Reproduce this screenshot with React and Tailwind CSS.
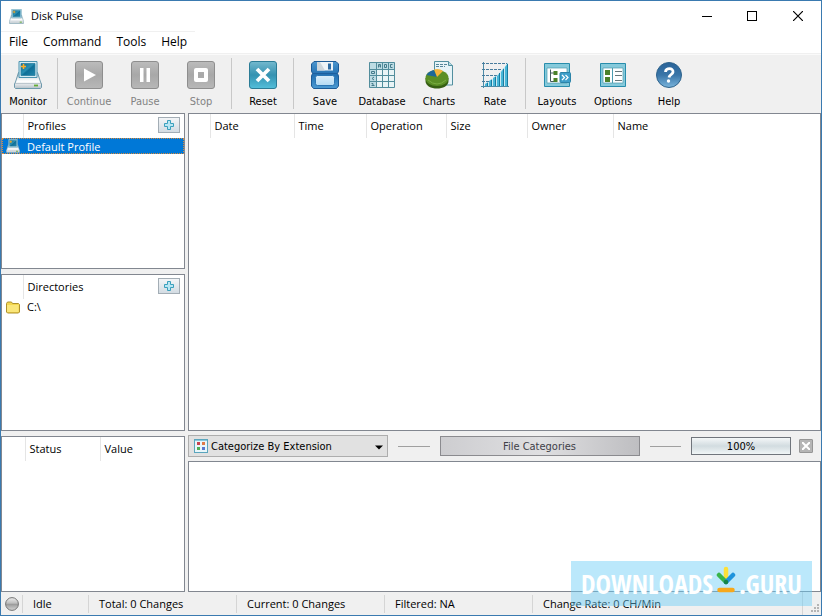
import React from 'react';

const MENUS = ['File', 'Command', 'Tools', 'Help'];

const TOOLBAR = [
  [{ label: 'Monitor', icon: MonitorIcon, width: 'w-[54px]' }],
  [
    { label: 'Continue', icon: ContinueIcon, disabled: true },
    { label: 'Pause', icon: PauseIcon, disabled: true },
    { label: 'Stop', icon: StopIcon, disabled: true },
  ],
  [{ label: 'Reset', icon: ResetIcon }],
  [
    { label: 'Save', icon: SaveIcon },
    { label: 'Database', icon: DatabaseIcon, width: 'w-[58px]' },
    { label: 'Charts', icon: ChartsIcon },
    { label: 'Rate', icon: RateIcon },
  ],
  [
    { label: 'Layouts', icon: LayoutsIcon },
    { label: 'Options', icon: OptionsIcon },
    { label: 'Help', icon: HelpIcon },
  ],
];

const EVENT_COLUMNS = [
  { label: '', width: 'w-[21px]' },
  { label: 'Date', width: 'w-[84px]' },
  { label: 'Time', width: 'w-[72px]' },
  { label: 'Operation', width: 'w-[80px]' },
  { label: 'Size', width: 'w-[81px]' },
  { label: 'Owner', width: 'w-[86px]' },
  { label: 'Name', width: '' },
];

const STATUS_COLUMNS = [
  { label: '', width: 'w-[23px]' },
  { label: 'Status', width: 'w-[75px]' },
  { label: 'Value', width: '' },
];

export default function App() {
  return (
    <div className="relative flex min-h-screen flex-col border border-[#3a7ab0] bg-[#f0f0f0] font-['Open_Sans','Noto_Sans',sans-serif] text-[11px] leading-4 text-black">
      <TitleBar />
      <MenuBar />
      <Toolbar />
      <main className="flex flex-1 gap-[3px]">
        <div className="flex w-[184px] shrink-0 flex-col gap-[5px]">
          <ListPanel title="Profiles">
            <tr className="h-4 bg-[#0078d7] text-white outline-1 -outline-offset-1 outline-dotted outline-[#d98a3a]">
              <td className="pl-1"><MonitorIcon className="h-[14px] w-[14px]" /></td>
              <td className="pl-1 leading-[15px]" colSpan={2}>Default Profile</td>
            </tr>
          </ListPanel>
          <ListPanel title="Directories">
            <tr className="h-4">
              <td className="pl-1"><FolderIcon /></td>
              <td className="pl-1" colSpan={2}>C:\</td>
            </tr>
          </ListPanel>
          <section className="flex-1 border border-[#828790] bg-white">
            <HeaderTable columns={STATUS_COLUMNS} />
          </section>
        </div>
        <div className="flex min-w-0 flex-1 flex-col">
          <section className="flex-1 border border-[#828790] bg-white">
            <HeaderTable columns={EVENT_COLUMNS} />
          </section>
          <CategoryBar />
          <section className="h-[131px] border border-[#828790] bg-white" />
        </div>
      </main>
      <StatusBar />
      <Watermark />
    </div>
  );
}

function TitleBar() {
  return (
    <header className="flex h-[30px] items-center bg-white pl-2">
      <MonitorIcon className="h-[15px] w-[15px]" />
      <h1 className="ml-[7px] flex-1">Disk Pulse</h1>
      <button aria-label="Minimize" className="flex h-full w-[45px] items-center justify-center">
        <svg width="10" height="10" shapeRendering="crispEdges"><path d="M0 5.5h10" stroke="#000" /></svg>
      </button>
      <button aria-label="Maximize" className="flex h-full w-[46px] items-center justify-center">
        <svg width="10" height="10" shapeRendering="crispEdges"><path d="M.5.5h9v9h-9z" fill="none" stroke="#000" /></svg>
      </button>
      <button aria-label="Close" className="flex h-full w-[46px] items-center justify-center">
        <svg width="10" height="10"><path d="M0 0l10 10M10 0L0 10" stroke="#000" strokeWidth="1.2" /></svg>
      </button>
    </header>
  );
}

function MenuBar() {
  return (
    <nav className="flex h-[23px] border-b border-[#f0f0f0] bg-white text-[12px]">
      <div className="flex h-[21px] items-center gap-[15px] border-t border-[#f0f0f0] px-2">
        {MENUS.map((menu) => <button key={menu}>{menu}</button>)}
      </div>
    </nav>
  );
}

function Toolbar() {
  return (
    <div role="toolbar" className="flex h-[59px] items-stretch border-t border-[#fafafa]">
      {TOOLBAR.map((group, i) => (
        <React.Fragment key={i}>
          {i > 0 && <div className="mt-[3px] mr-[3px] mb-1 ml-[2px] w-px bg-[#c8c8c8]" />}
          {group.map(({ label, icon: Icon, disabled, width = 'w-[56px]' }) => (
            <button
              key={label}
              disabled={disabled}
              className={`flex ${width} shrink-0 flex-col items-center gap-[5px] pt-[6px] font-['DejaVu_Sans_Condensed','Noto_Sans',sans-serif] ${disabled ? 'text-[#838383]' : ''}`}
            >
              <Icon className="h-7 w-7" />
              {label}
            </button>
          ))}
        </React.Fragment>
      ))}
    </div>
  );
}

function ListPanel({ title, children }) {
  return (
    <section className="flex-1 border border-[#828790] bg-white">
      <table className="w-full table-fixed border-collapse">
        <thead>
          <tr className="h-6">
            <th className="w-[21px] border-r border-[#e5e5e5]" />
            <th className="pl-1 text-left font-normal">{title}</th>
            <th className="w-[26px] pb-[2px]">
              <button aria-label={`Add ${title}`} className="flex h-[16px] w-[22px] items-center justify-center border border-[#a3adb5] bg-linear-to-b from-[#f3f5f7] to-[#d3dce3]">
                <svg width="10" height="10" viewBox="0 0 10 10">
                  <path d="M3.5.5h3v3h3v3h-3v3h-3v-3h-3v-3h3z" fill="#b9e6f3" stroke="#3aa0bd" />
                </svg>
              </button>
            </th>
          </tr>
        </thead>
        <tbody>{children}</tbody>
      </table>
    </section>
  );
}

function HeaderTable({ columns }) {
  return (
    <table className="w-full table-fixed border-collapse">
      <thead>
        <tr className="h-6">
          {columns.map(({ label, width }) => (
            <th key={label} className={`${width} border-r border-[#e5e5e5] pl-1 text-left font-normal last:border-r-0`}>{label}</th>
          ))}
        </tr>
      </thead>
    </table>
  );
}

function CategoryBar() {
  return (
    <div className="flex h-[30px] items-center pr-2 font-['DejaVu_Sans_Condensed','Noto_Sans',sans-serif]">
      <div className="relative w-[200px]">
        <select aria-label="Category" className="block h-[22px] w-full appearance-none border border-[#adadad] bg-[#e1e1e1] pt-px pl-[22px]">
          <option>Categorize By Extension</option>
        </select>
        <svg className="pointer-events-none absolute top-1 left-[6px]" width="14" height="14" viewBox="0 0 14 14">
          <rect x=".5" y=".5" width="13" height="13" fill="#e9f6fa" stroke="#5aa5bd" />
          <path d="M1 1.500h12" stroke="#8bc9dc" />
          <path d="M3 3h3v3H3z" fill="#c8434f" /><path d="M8 3h3v3H8z" fill="#e07a48" />
          <path d="M3 8h3v3H3z" fill="#4fae55" /><path d="M8 8h3v3H8z" fill="#5a78cf" />
        </svg>
        <svg className="pointer-events-none absolute top-[10px] right-[5px]" width="8" height="5"><path d="M0 .5h8L4 4.500z" fill="#000" /></svg>
      </div>
      <div className="mx-[10px] h-px flex-1 bg-[#a0a0a0]" />
      <button className="h-[20px] w-[200px] border border-[#8b8b8f] bg-linear-to-r from-[#cdcdd0] via-[#dfdfe1] to-[#bebec1] pt-px text-[#404048]">File Categories</button>
      <div className="mx-[10px] h-px flex-1 bg-[#a0a0a0]" />
      <div role="progressbar" aria-label="Percentage" aria-valuenow={100} className="h-[18px] w-[100px] border border-[#70757c] bg-linear-to-b from-[#f4f7f8] via-[#d2dce0] to-[#f0f5f6] pt-px text-center">100%</div>
      <button aria-label="Close categories" className="ml-2 flex h-[14px] w-[14px] items-center justify-center rounded-[1px] border border-[#969696] bg-[#b5b5b5]">
        <svg width="8" height="8"><path d="M0 0l8 8M8 0L0 8" stroke="#fff" strokeWidth="2" /></svg>
      </button>
    </div>
  );
}

function StatusBar() {
  return (
    <footer className="flex h-[23px] items-center">
      <svg className="mr-[3px] ml-1 shrink-0" width="14" height="14" viewBox="0 0 14 14">
        <defs>
          <linearGradient id="led" x2="0" y2="1"><stop stopColor="#ededed" /><stop offset=".45" stopColor="#bcbcbc" /><stop offset=".5" stopColor="#989898" /><stop offset="1" stopColor="#d6d6d6" /></linearGradient>
        </defs>
        <circle cx="7" cy="7" r="6.400" fill="url(#led)" stroke="#747474" />
      </svg>
      <StatusCell className="w-[66px]">Idle</StatusCell>
      <StatusCell className="w-[148px]">Total: 0 Changes</StatusCell>
      <StatusCell className="w-[148px]">Current: 0 Changes</StatusCell>
      <StatusCell className="w-[148px]">Filtered: NA</StatusCell>
      <StatusCell className="flex-1">Change Rate: 0 CH/Min</StatusCell>
      <div className="flex h-full w-[19px] items-end justify-end border-l border-[#d5d5d5] p-px">
        <svg width="11" height="11" shapeRendering="crispEdges">
          <path d="M8 1h2v2H8zM8 4h2v2H8zM8 7h2v2H8zM5 4h2v2H5zM5 7h2v2H5zM2 7h2v2H2z" fill="#b4b4b4" />
        </svg>
      </div>
    </footer>
  );
}

function StatusCell({ className, children }) {
  return (
    <div className={`${className} h-[18px] shrink-0 border-l border-[#d5d5d5] pt-px pl-[10px]`}>{children}</div>
  );
}

function Watermark() {
  return (
    <div className="absolute right-[9px] bottom-[9px] flex h-[45px] w-[241px] items-center justify-center bg-[#68cbf7]/45 font-['Liberation_Sans_Narrow','Open_Sans_Condensed',sans-serif] text-[26px] leading-none font-bold text-white">
      <span>DOWNLOADS</span>
      <svg className="mx-[3px] mb-2 shrink-0" width="20" height="27" viewBox="0 0 20 27" strokeLinecap="round" strokeWidth="4.500">
        <path d="M10 3v10" stroke="#fde038" />
        <path d="M3 9l7 7" stroke="#39b54a" />
        <path d="M17 9l-7 7" stroke="#1e93dc" />
        <path d="M10 16h0" stroke="#168447" />
        <path d="M3.500 24h13" stroke="#f7a81b" />
      </svg>
      <span>.GURU</span>
    </div>
  );
}

function FolderIcon() {
  return (
    <svg width="15" height="14" viewBox="0 0 15 14">
      <path d="M.5 3.500l1-1.500h4l1 1.500h6l1 1V12l-1 1H1.500l-1-1z" fill="#f3d64e" stroke="#ad902c" />
      <path d="M1 5h11.500v7H1z" fill="#fae67a" />
    </svg>
  );
}

/* Toolbar icons */

function MonitorIcon({ className }) {
  return (
    <svg className={className} viewBox="0 0 28 28">
      <defs>
        <linearGradient id="screen" x2="1" y2="1"><stop stopColor="#0a6a92" /><stop offset=".45" stopColor="#2a8fb2" /><stop offset=".55" stopColor="#0f6f97" /><stop offset="1" stopColor="#2388ad" /></linearGradient>
        <linearGradient id="base" x2="0" y2="1"><stop stopColor="#b9c3ca" /><stop offset=".55" stopColor="#fff" /><stop offset="1" stopColor="#b5c0c8" /></linearGradient>
      </defs>
      <path d="M4.500 11.500h19l3 9.500 1 2v3.500l-1 1h-25l-1-1V23l1-2z" fill="url(#base)" stroke="#6d99ac" />
      <path d="M5 .5h18v16H5z" fill="#d5edf5" stroke="#4b93af" />
      <path d="M7 2.500h14v12H7z" fill="url(#screen)" stroke="#2b7fa0" strokeWidth=".8" />
      <path d="M9.500 3v5M7 5.500h5" stroke="#ffae24" strokeWidth="1.600" />
      <path d="M1 22.500h26" stroke="#aab8c0" strokeWidth=".7" />
      <path d="M20 24.500h4" stroke="#65ad35" strokeWidth="1.800" />
    </svg>
  );
}

function GreyTile({ className, children }) {
  return (
    <svg className={className} viewBox="0 0 28 28">
      <defs>
        <linearGradient id="grey" x2="0" y2="1"><stop stopColor="#bcbcbc" /><stop offset=".5" stopColor="#a8a8a8" /><stop offset="1" stopColor="#b8b8b8" /></linearGradient>
      </defs>
      <rect x=".5" y=".5" width="27" height="27" rx="2.500" fill="url(#grey)" stroke="#8e8e8e" />
      {children}
    </svg>
  );
}

function ContinueIcon(props) {
  return <GreyTile {...props}><path d="M9 7.500v13L21 14z" fill="#fff" /></GreyTile>;
}

function PauseIcon(props) {
  return <GreyTile {...props}><path d="M9 7h3.500v14H9zM15.500 7H19v14h-3.500z" fill="#fff" /></GreyTile>;
}

function StopIcon(props) {
  return <GreyTile {...props}><path d="M9 9h10v10H9z" fill="none" stroke="#fff" strokeWidth="4" strokeLinejoin="round" /></GreyTile>;
}

function ResetIcon({ className }) {
  return (
    <svg className={className} viewBox="0 0 28 28">
      <defs>
        <linearGradient id="reset" x2="0" y2="1"><stop stopColor="#74b9ce" /><stop offset=".5" stopColor="#3592b1" /><stop offset="1" stopColor="#53bfda" /></linearGradient>
      </defs>
      <rect x=".5" y=".5" width="27" height="27" rx="2.500" fill="url(#reset)" stroke="#2b7c96" />
      <path d="M8 8l12 12M20 8L8 20" stroke="#fff" strokeWidth="3.800" />
    </svg>
  );
}

function SaveIcon({ className }) {
  return (
    <svg className={className} viewBox="0 0 28 28">
      <defs>
        <linearGradient id="disk" x2="0" y2="1"><stop stopColor="#4c96ce" /><stop offset=".5" stopColor="#2370b2" /><stop offset="1" stopColor="#4b9ad2" /></linearGradient>
        <linearGradient id="disk-label" x2="0" y2="1"><stop stopColor="#dbeefa" /><stop offset="1" stopColor="#b4daf3" /></linearGradient>
      </defs>
      <path d="M3 .5h22l2.500 2.500v7l-1 2.500 1 2.500v10l-2 2.500H2.500l-2-2.500V15l1-2.500-1-2.500V3z" fill="url(#disk)" stroke="#1c5b97" />
      <path d="M6 1h16v8.500H6z" fill="#eef4f8" />
      <path d="M9 1l5 8.500H6V1z" fill="#cdd6dc" />
      <path d="M17 2.500h3v6h-3z" fill="#2e6ca3" />
      <path d="M2 12.500h24" stroke="#1d5f9e" />
      <rect x="4.500" y="14.500" width="19" height="10" rx="2" fill="url(#disk-label)" stroke="#2b76b4" />
    </svg>
  );
}

function DatabaseIcon({ className }) {
  return (
    <svg className={className} viewBox="0 0 28 28">
      <path d="M1 1h26v7H1zM1 1h7v26H1z" fill="#bddce4" />
      <path d="M8 8h19v19H8z" fill="#e9f4f6" />
      <path d="M1.500 1.500h25v25h-25zM8.500 1v26M14.500 1v26M20.500 1v26M1 8.500h26M1 14.500h26M1 20.500h26" fill="none" stroke="#528d9c" />
      <path d="M10.500 6.500v-3h2v3M10.500 5h2M16.500 3.500h2v3h-2zM24.500 3.500h-2v3h2M3.500 10.500h3v2h-3zM6 16l-2 1.500L6 19M3.500 22.500H5v2M3.500 24.500h3" fill="none" stroke="#447b8b" />
    </svg>
  );
}

function ChartsIcon({ className }) {
  return (
    <svg className={className} viewBox="0 0 28 28">
      <path d="M9.500.5h14l4 4v19.500h-18z" fill="#e6f3f7" stroke="#528f9f" />
      <path d="M23.500.5v4h4" fill="#b7dbe4" stroke="#528f9f" />
      <path d="M11 3.500h11M11 5.500h9" stroke="#55859a" strokeDasharray="3 1" />
      <path d="M.500 17v3c0 10 23 10 23 0v-3z" fill="#365f13" />
      <ellipse cx="12" cy="17" rx="11.500" ry="8" fill="#5a8f25" />
      <path d="M12 16L1.500 14Q4 10 9 9z" fill="#1c6799" />
      <path d="M12 16L9 8.500Q14 7 18 10z" fill="#f3b43e" />
      <path d="M3 19q9 8 18 0" fill="none" stroke="#79ac42" />
    </svg>
  );
}

function RateIcon({ className }) {
  return (
    <svg className={className} viewBox="0 0 28 28">
      <path d="M2.500 1v26M0 25.500h28" stroke="#4c8ba7" />
      <path d="M1 2.500h25M1 8.500h20M1 14.500h15M1 20.500h8" stroke="#477b9d" strokeDasharray="3 1" />
      <path d="M3 25L15 15.500 27 2v23z" fill="#c9e8f1" />
      <path d="M4 25v-2l3-2v4zM8 25v-5l3-2v7zM12 25v-8l3-2v10zM16 25V15l3-3v13zM20 25V11l3-4v18zM24 25V6l3-4v23z" fill="#48b7d9" />
      <path d="M6.500 22v3M10.500 19v6M14.500 16v9M18.500 12v13M22.500 8v17M26.500 3v22" stroke="#187b9f" />
    </svg>
  );
}

function LayoutsIcon({ className }) {
  return (
    <svg className={className} viewBox="0 0 28 28">
      <path d="M1.500 2.500h25v23h-25z" fill="#86cadb" stroke="#288dac" />
      <path d="M4 7h20v15H4z" fill="#fff" stroke="#4c9cb0" strokeWidth=".7" />
      <path d="M7.500 8.500v12H11M7.500 12H11" fill="none" stroke="#455b61" />
      <path d="M10.500 10h4v4h-4zM10.500 17h4v4h-4z" fill="#4b812a" />
      <rect x="17" y="11.500" width="10.500" height="10" rx="1" fill="#3e9fca" stroke="#2b83a8" />
      <path d="M19 14l2.500 2.500L19 19M22.500 14l2.500 2.500-2.500 2.500" fill="none" stroke="#fff" strokeWidth="1.200" />
    </svg>
  );
}

function OptionsIcon({ className }) {
  return (
    <svg className={className} viewBox="0 0 28 28">
      <path d="M1.500 2.500h25v23h-25z" fill="#86cadb" stroke="#288dac" />
      <path d="M4 7h20v15H4z" fill="#fff" stroke="#4c9cb0" strokeWidth=".7" />
      <path d="M13.500 7v15" stroke="#4c9cb0" />
      <path d="M6 9h5v5H6zM6 16h5v5H6z" fill="#4b812a" />
      <path d="M16 10.500h7M16 14.500h7M16 19.500h7" stroke="#66777b" />
    </svg>
  );
}

function HelpIcon({ className }) {
  return (
    <svg className={className} viewBox="0 0 28 28">
      <defs>
        <linearGradient id="help" x2="0" y2="1"><stop stopColor="#2a6398" /><stop offset=".5" stopColor="#3975a8" /><stop offset="1" stopColor="#7bb5dc" /></linearGradient>
      </defs>
      <circle cx="14" cy="14" r="12.500" fill="url(#help)" stroke="#2e638c" />
      <path d="M10.500 11c0-4.500 8-4.500 7.500 0-.300 2.500-3.500 2.500-4 5.500" fill="none" stroke="#fff" strokeWidth="2.800" />
      <circle cx="13.500" cy="20" r="1.700" fill="#fff" />
    </svg>
  );
}
